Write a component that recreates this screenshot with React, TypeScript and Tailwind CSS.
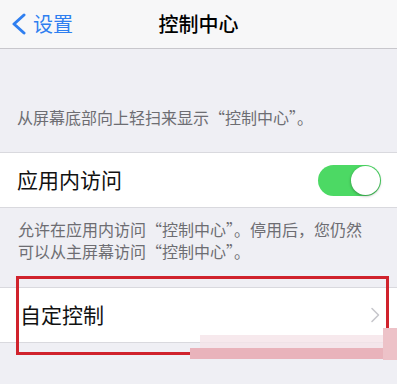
import React from "react";

const cjk = "font-['Noto_Sans_CJK_SC','Noto_Sans_CJK_JP',sans-serif]";

export default function App() {
  return (
    <div className={`relative w-[397px] h-[384px] overflow-hidden bg-[#efeff4] ${cjk}`}>
      {/* Nav bar */}
      <header className="relative h-[49px] bg-[#f7f7f8] border-b border-[#c8c7cc] flex items-center">
        <div className="flex items-center pl-[10px] text-[#2f7ff0]">
          <svg width="17" height="22" viewBox="0 0 17 22" fill="none">
            <path d="M14 2 L4 11 L14 20" stroke="currentColor" strokeWidth="3" strokeLinecap="round" strokeLinejoin="round" />
          </svg>
          <span className="ml-[6px] text-[20px] leading-none">设置</span>
        </div>
        <h1 className="absolute inset-x-0 text-center text-[20px] font-medium text-black leading-none pointer-events-none">
          控制中心
        </h1>
      </header>

      {/* Caption */}
      <p className="pt-[57px] pb-[24px] px-[17px] text-[16px] leading-[22px] text-[#6d6d72]">
        从屏幕底部向上轻扫来显示“控制中心”。
      </p>

      {/* Toggle row */}
      <div className="h-[56px] bg-white border-y border-[#d9d9de] flex items-center justify-between pl-[17px] pr-[16px]">
        <span className="text-[21px] text-[#111]">应用内访问</span>
        <Toggle />
      </div>

      {/* Footer */}
      <p className="pt-[10px] pb-[25px] px-[18px] text-[16px] leading-[22px] text-[#6d6d72]">
        允许在应用内访问“控制中心”。停用后，您仍然
        <br />
        可以从主屏幕访问“控制中心”。
      </p>

      {/* Customize row */}
      <div className="h-[56px] bg-white border-y border-[#d9d9de] flex items-center justify-between pl-[20px] pr-[17px]">
        <span className="text-[21px] text-[#111]">自定控制</span>
        <svg width="10" height="16" viewBox="0 0 10 16" fill="none">
          <path d="M2 1.5 L8.5 8 L2 14.5" stroke="#c7c7cc" strokeWidth="1.6" strokeLinecap="round" strokeLinejoin="round" />
        </svg>
      </div>

      {/* Red highlight box */}
      <div className="absolute left-[16px] top-[276px] w-[373px] h-[79px] border-[3px] border-[#d0222c]" />

      {/* Pink watermark */}
      <div className="absolute left-[200px] top-[335px] w-[197px] h-[13px] bg-[#f5e4e8]/80" />
      <div className="absolute left-[190px] top-[348px] w-[207px] h-[11px] bg-[#e9b3bb]" />
      <div className="absolute left-[383px] top-[328px] w-[14px] h-[32px] bg-[#edc2c8]" />
    </div>
  );
}

function Toggle() {
  return (
    <div className="w-[63px] h-[31px] rounded-full bg-[#4cd964] flex items-center justify-end pr-[1px]">
      <div className="w-[29px] h-[29px] rounded-full bg-white shadow-[0_1px_3px_rgba(0,0,0,0.35)]" />
    </div>
  );
}
